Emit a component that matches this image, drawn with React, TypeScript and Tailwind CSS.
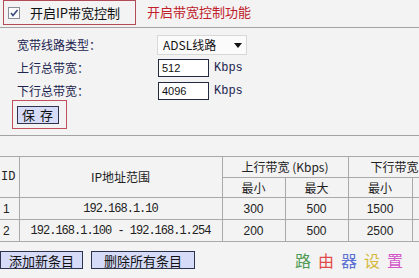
import React from "react";

const cjk = { fontFamily: '"Noto Sans CJK SC", "Liberation Sans", sans-serif' };
const mono = { fontFamily: '"Liberation Mono", "Noto Sans CJK SC", monospace' };
const sans = { fontFamily: '"Liberation Sans", sans-serif' };

const rows = [
  { id: "1", range: "192.168.1.10", upMin: "300", upMax: "500", downMin: "1500" },
  { id: "2", range: "192.168.1.100 - 192.168.1.254", upMin: "200", upMax: "500", downMin: "2500" },
];

function Checkbox() {
  return (
    <svg width="12" height="12" viewBox="0 0 12 12" className="shrink-0">
      <rect x="0.5" y="0.5" width="11" height="11" fill="#fcfcfc" stroke="#8a8f9a" />
      <path d="M3 6 L5 8.5 L9.5 3" fill="none" stroke="#3a4a7a" strokeWidth="1.6" />
    </svg>
  );
}

const td = "border border-[#a9a9a9] text-center font-normal";

export default function App() {
  return (
    <div className="w-[419px] h-[278px] overflow-hidden bg-[#f3f3f3] text-[12px] leading-none text-[#111]" style={cjk}>
      {/* enable bar */}
      <div className="flex items-start h-[28px] border-b border-[#a3a3a3]">
        <div className="ml-[3px] w-[133px] h-[25px] border border-[#b24a58] flex items-center pl-[4px] gap-[10px]">
          <Checkbox />
          <span className="text-[13px] text-[#111]">开启IP带宽控制</span>
        </div>
        <span className="ml-[11px] mt-[5px] text-[13px] text-[#c0202a]">开启带宽控制功能</span>
      </div>

      {/* settings */}
      <div className="flex flex-col">
        <div className="mt-[7px] h-[20px] flex items-center">
          <span className="w-[157px] pl-[17px] text-[#1c2550]">宽带线路类型：</span>
          <div className="w-[90px] h-[20px] bg-[#fbfbfb] border border-[#d8d8d8] flex items-center justify-between pl-[5px] pr-[4px]">
            <span className="text-[12px] text-[#111]">ADSL线路</span>
            <svg width="8" height="5" viewBox="0 0 8 5"><path d="M0 0 H8 L4 5 Z" fill="#111" /></svg>
          </div>
        </div>
        <div className="mt-[4px] h-[18px] flex items-center">
          <span className="w-[158px] pl-[17px] text-[#1c2550]">上行总带宽：</span>
          <div className="w-[51px] h-[18px] bg-white border border-[#222a40] flex items-center pl-[3px] text-[11px]" style={sans}>512</div>
          <span className="ml-[5px] text-[#1c2550]" style={mono}>Kbps</span>
        </div>
        <div className="mt-[5px] h-[18px] flex items-center">
          <span className="w-[158px] pl-[17px] text-[#1c2550]">下行总带宽：</span>
          <div className="w-[51px] h-[18px] bg-white border border-[#222a40] flex items-center pl-[3px] text-[11px]" style={sans}>4096</div>
          <span className="ml-[5px] text-[#1c2550]" style={mono}>Kbps</span>
        </div>
        <div className="ml-[12px] w-[55px] h-[29px] border border-[#c0505c] flex items-center pl-[4px]">
          <button className="w-[42px] h-[18px] bg-[#d6dbf7] border border-[#2e3450] text-[13px] text-[#111] tracking-[5px] pl-[4px] leading-none">保存</button>
        </div>
        <div className="mt-[6px] border-t border-[#a3a3a3]" />
      </div>

      {/* rules table */}
      <div className="mt-[20px] w-[419px] overflow-hidden">
        <table className="table-fixed border-collapse w-[490px] text-[#222]">
          <colgroup>
            <col className="w-[19px]" />
            <col className="w-[203px]" />
            <col className="w-[63px]" />
            <col className="w-[63px]" />
            <col className="w-[64px]" />
            <col className="w-[78px]" />
          </colgroup>
          <thead>
            <tr className="h-[21px]">
              <th rowSpan={2} className={`${td} border-l-0 text-left pl-[1px]`} style={mono}>ID</th>
              <th rowSpan={2} className={td}>IP地址范围</th>
              <th colSpan={2} className={td}>上行带宽 (Kbps)</th>
              <th colSpan={2} className={`${td} text-left pl-[22px]`}>下行带宽</th>
            </tr>
            <tr className="h-[20px]">
              <th className={td}>最小</th>
              <th className={td}>最大</th>
              <th className={td}>最小</th>
              <th className={td}></th>
            </tr>
          </thead>
          <tbody>
            {rows.map((r) => (
              <tr key={r.id} className="h-[22px]">
                <td className={`${td} border-l-0 text-left pl-[3px]`} style={sans}>{r.id}</td>
                <td className={`${td} tracking-[-1px]`} style={mono}>{r.range}</td>
                <td className={td} style={sans}>{r.upMin}</td>
                <td className={td} style={sans}>{r.upMax}</td>
                <td className={td} style={sans}>{r.downMin}</td>
                <td className={td}></td>
              </tr>
            ))}
          </tbody>
        </table>
      </div>

      {/* actions */}
      <div className="mt-[9px] flex items-center">
        <button className="w-[83px] h-[18px] bg-[#d6dbf7] border border-[#2e3450] text-[13px] text-[#111] leading-none">添加新条目</button>
        <button className="ml-[8px] w-[104px] h-[18px] bg-[#d6dbf7] border border-[#2e3450] text-[13px] text-[#111] leading-none">删除所有条目</button>
        <div className="ml-[100px] flex gap-[7px] text-[16px]" style={{ fontFamily: '"Noto Sans CJK SC", serif' }}>
          <span className="text-[#4f9a52]">路</span>
          <span className="text-[#e24a4a]">由</span>
          <span className="text-[#5b72d2]">器</span>
          <span className="text-[#d6b83a]">设</span>
          <span className="text-[#d456c8]">置</span>
        </div>
      </div>
    </div>
  );
}
